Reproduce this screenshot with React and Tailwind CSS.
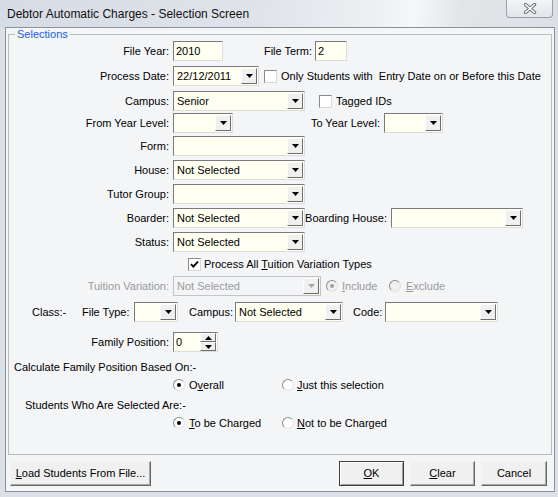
import React from 'react';

const Lbl = ({ w, gray, children }) => (
  <span className={`${w} shrink-0 text-right whitespace-nowrap ${gray ? 'text-[#9a9a9a]' : 'text-black'}`}>{children}</span>
);

const Arrow = ({ disabled }) => (
  <div className="w-[16px] h-[16px] mr-[1px] shrink-0 flex items-center justify-center bg-[#f0f0f0] border border-t-[#fdfdfd] border-l-[#fdfdfd] border-r-[#6e6e6e] border-b-[#6e6e6e]">
    <svg width="7" height="4" viewBox="0 0 7 4">
      <path d="M0 0h7L3.5 4z" fill={disabled ? '#a8a8a8' : '#000'} />
    </svg>
  </div>
);

const Edit = ({ w, className = '', children }) => (
  <div className={`${w} ${className} h-[20px] shrink-0 flex items-center pl-[2px] bg-[#fffff2] border border-t-[#7b7b7b] border-l-[#7b7b7b] border-r-[#dcdcdc] border-b-[#dcdcdc]`}>
    {children}
  </div>
);

const Combo = ({ w, className = '', disabled, children }) => (
  <div
    className={`${w} ${className} h-[20px] shrink-0 flex items-center border ${
      disabled
        ? 'bg-[#f4f5f7] border-[#c4c4c4] text-[#9a9a9a]'
        : 'bg-[#fffff2] border-t-[#7b7b7b] border-l-[#7b7b7b] border-r-[#dcdcdc] border-b-[#dcdcdc]'
    }`}
  >
    <span className="flex-1 pl-[3px] whitespace-nowrap overflow-hidden">{children}</span>
    <Arrow disabled={disabled} />
  </div>
);

const Check = ({ checked, className = '' }) => (
  <span className={`${className} w-[13px] h-[13px] shrink-0 flex items-center justify-center bg-white border border-t-[#8a8a8a] border-l-[#8a8a8a] border-r-[#d8d8d8] border-b-[#d8d8d8]`}>
    {checked && (
      <svg width="9" height="9" viewBox="0 0 9 9">
        <path d="M1 4.2l2.3 2.4L8 1.6" fill="none" stroke="#000" strokeWidth="1.9" />
      </svg>
    )}
  </span>
);

const Radio = ({ checked, disabled, className = '' }) => (
  <span className={`${className} w-[12px] h-[12px] shrink-0 rounded-full flex items-center justify-center border border-t-[#8c8c8c] border-l-[#8c8c8c] border-r-[#e2e2e2] border-b-[#e2e2e2] ${disabled ? 'bg-[#f0f0f0]' : 'bg-white'}`}>
    {checked && <span className={`w-[4px] h-[4px] rounded-full ${disabled ? 'bg-[#a0a0a0]' : 'bg-black'}`} />}
  </span>
);

const Button = ({ w, def, children }) => (
  <div
    className={`${w} h-[25px] shrink-0 flex items-center justify-center bg-[#f0f0f0] border ${
      def
        ? 'border-[#3e3e3e] shadow-[inset_1px_1px_0_#ffffff,inset_-1px_-1px_0_#9c9c9c]'
        : 'border-t-[#f4f4f4] border-l-[#f4f4f4] border-r-[#666] border-b-[#666] shadow-[inset_-1px_-1px_0_#a8a8a8]'
    }`}
  >
    {children}
  </div>
);

export default function App() {
  return (
    <div className="w-[558px] h-[497px] flex flex-col overflow-hidden bg-[#dde1e7] text-[11px] leading-[13px] text-black font-['Liberation_Sans',Arial,sans-serif]">
      {/* title bar */}
      <div className="h-[27px] shrink-0 flex items-start bg-[linear-gradient(100deg,#d6dce5_0%,#dfe3e9_45%,#eef0f3_68%,#f6f7f8_74%,#e3e5e9_82%,#dcdfe4_100%)]">
        <span className="ml-[7px] mt-[7px] text-[12px] leading-[15px] text-[#111]">Debtor Automatic Charges - Selection Screen</span>
        <div className="ml-auto mr-[5px] w-[47px] h-[18px] flex items-center justify-center rounded-b-[4px] border border-t-0 border-[#98a0aa] bg-[linear-gradient(#f3f4f6,#e2e5e9)]">
          <svg width="14" height="11" viewBox="0 0 14 11">
            <path d="M2.5 1.5l9 8M11.5 1.5l-9 8" stroke="#6a6f76" strokeWidth="3.4" strokeLinecap="round" />
            <path d="M2.5 1.5l9 8M11.5 1.5l-9 8" stroke="#fff" strokeWidth="1.6" strokeLinecap="round" />
          </svg>
        </div>
      </div>

      {/* client area */}
      <div className="ml-[5px] w-[550px] h-[465px] shrink-0 flex flex-col bg-[#f4f5f7] border border-[#8c929a]">
        <div className="relative ml-[2px] mt-[6px] w-[544px] h-[421px] shrink-0 flex flex-col border border-[#b8bdc4]">
          <span className="absolute left-[6px] top-[-7px] px-[2px] bg-[#f4f5f7] leading-[13px] text-[#1b5fd3]">Selections</span>

          <div className="mt-[6px] h-[20px] flex items-center">
            <Lbl w="w-[160px]">File Year:</Lbl>
            <Edit w="w-[50px]" className="ml-[4px]">2010</Edit>
            <Lbl w="w-[89px]">File Term:</Lbl>
            <Edit w="w-[32px]" className="ml-[3px]">2</Edit>
          </div>

          <div className="mt-[5px] h-[20px] flex items-center">
            <Lbl w="w-[160px]">Process Date:</Lbl>
            <Combo w="w-[86px]" className="ml-[4px]">22/12/2011</Combo>
            <Check className="ml-[5px]" />
            <span className="ml-[4px] whitespace-pre">Only Students with  Entry Date on or Before this Date</span>
          </div>

          <div className="mt-[5px] h-[20px] flex items-center">
            <Lbl w="w-[160px]">Campus:</Lbl>
            <Combo w="w-[132px]" className="ml-[4px]">Senior</Combo>
            <Check className="ml-[14px]" />
            <span className="ml-[4px]">Tagged IDs</span>
          </div>

          <div className="mt-[2px] h-[20px] flex items-center">
            <Lbl w="w-[160px]">From Year Level:</Lbl>
            <Combo w="w-[60px]" className="ml-[4px]" />
            <Lbl w="w-[147px]">To Year Level:</Lbl>
            <Combo w="w-[59px]" className="ml-[4px]" />
          </div>

          <div className="mt-[3px] h-[20px] flex items-center">
            <Lbl w="w-[160px]">Form:</Lbl>
            <Combo w="w-[132px]" className="ml-[4px]" />
          </div>

          <div className="mt-[4px] h-[20px] flex items-center">
            <Lbl w="w-[160px]">House:</Lbl>
            <Combo w="w-[132px]" className="ml-[4px]">Not Selected</Combo>
          </div>

          <div className="mt-[4px] h-[20px] flex items-center">
            <Lbl w="w-[160px]">Tutor Group:</Lbl>
            <Combo w="w-[132px]" className="ml-[4px]" />
          </div>

          <div className="mt-[4px] h-[20px] flex items-center">
            <Lbl w="w-[160px]">Boarder:</Lbl>
            <Combo w="w-[132px]" className="ml-[4px]">Not Selected</Combo>
            <Lbl w="w-[82px]">Boarding House:</Lbl>
            <Combo w="w-[132px]" className="ml-[4px]" />
          </div>

          <div className="mt-[4px] h-[20px] flex items-center">
            <Lbl w="w-[160px]">Status:</Lbl>
            <Combo w="w-[132px]" className="ml-[4px]">Not Selected</Combo>
          </div>

          <div className="mt-[2px] h-[20px] flex items-center">
            <Check checked className="ml-[179px]" />
            <span className="ml-[3px]">Process All <u>T</u>uition Variation Types</span>
          </div>

          <div className="mt-[2px] h-[20px] flex items-center">
            <Lbl w="w-[160px]" gray>Tuition Variation:</Lbl>
            <Combo w="w-[148px]" className="ml-[4px]" disabled>Not Selected</Combo>
            <Radio checked disabled className="ml-[5px]" />
            <span className="ml-[4px] w-[47px] text-[#9a9a9a]"><u>I</u>nclude</span>
            <Radio disabled />
            <span className="ml-[5px] text-[#9a9a9a]"><u>E</u>xclude</span>
          </div>

          <div className="mt-[6px] h-[20px] flex items-center">
            <span className="ml-[23px] w-[50px] shrink-0">Class:-</span>
            <span className="w-[52px] shrink-0">File Type:</span>
            <Combo w="w-[44px]" />
            <span className="w-[57px] shrink-0 pl-[11px]">Campus:</span>
            <Combo w="w-[108px]">Not Selected</Combo>
            <span className="w-[42px] shrink-0 pl-[10px]">Code:</span>
            <Combo w="w-[113px]" />
          </div>

          <div className="mt-[10px] h-[20px] flex items-center">
            <Lbl w="w-[160px]">Family Position:</Lbl>
            <div className="ml-[4px] w-[45px] h-[20px] shrink-0 flex items-center bg-[#fffff2] border border-t-[#7b7b7b] border-l-[#7b7b7b] border-r-[#dcdcdc] border-b-[#dcdcdc]">
              <span className="flex-1 pl-[2px]">0</span>
              <div className="w-[16px] h-[18px] mr-[1px] flex flex-col">
                <div className="h-[9px] flex items-center justify-center bg-[#f0f0f0] border border-t-[#fdfdfd] border-l-[#fdfdfd] border-r-[#6e6e6e] border-b-[#6e6e6e]">
                  <svg width="7" height="4" viewBox="0 0 7 4"><path d="M0 4h7L3.5 0z" fill="#000" /></svg>
                </div>
                <div className="h-[9px] flex items-center justify-center bg-[#f0f0f0] border border-t-[#fdfdfd] border-l-[#fdfdfd] border-r-[#6e6e6e] border-b-[#6e6e6e]">
                  <svg width="7" height="4" viewBox="0 0 7 4"><path d="M0 0h7L3.5 4z" fill="#000" /></svg>
                </div>
              </div>
            </div>
          </div>

          <div className="mt-[7px] h-[16px] flex items-center">
            <span className="ml-[5px]">Calculate Family Position Based On:-</span>
          </div>

          <div className="mt-[2px] h-[16px] flex items-center">
            <Radio checked className="ml-[164px]" />
            <span className="ml-[4px] w-[93px]">O<u>v</u>erall</span>
            <Radio />
            <span className="ml-[3px]"><u>J</u>ust this selection</span>
          </div>

          <div className="mt-[4px] h-[16px] flex items-center">
            <span className="ml-[16px]">Students Who Are Selected Are:-</span>
          </div>

          <div className="mt-[2px] h-[16px] flex items-center">
            <Radio checked className="ml-[164px]" />
            <span className="ml-[4px] w-[93px]"><u>T</u>o be Charged</span>
            <Radio />
            <span className="ml-[3px]"><u>N</u>ot to be Charged</span>
          </div>
        </div>

        <div className="mt-[6px] pl-[4px] pr-[7px] flex items-center">
          <Button w="w-[141px]"><span><u>L</u>oad Students From File...</span></Button>
          <div className="ml-auto flex gap-[6px]">
            <Button w="w-[65px]" def><span><u>O</u>K</span></Button>
            <Button w="w-[65px]"><span><u>C</u>lear</span></Button>
            <Button w="w-[66px]">Cancel</Button>
          </div>
        </div>
      </div>
    </div>
  );
}
